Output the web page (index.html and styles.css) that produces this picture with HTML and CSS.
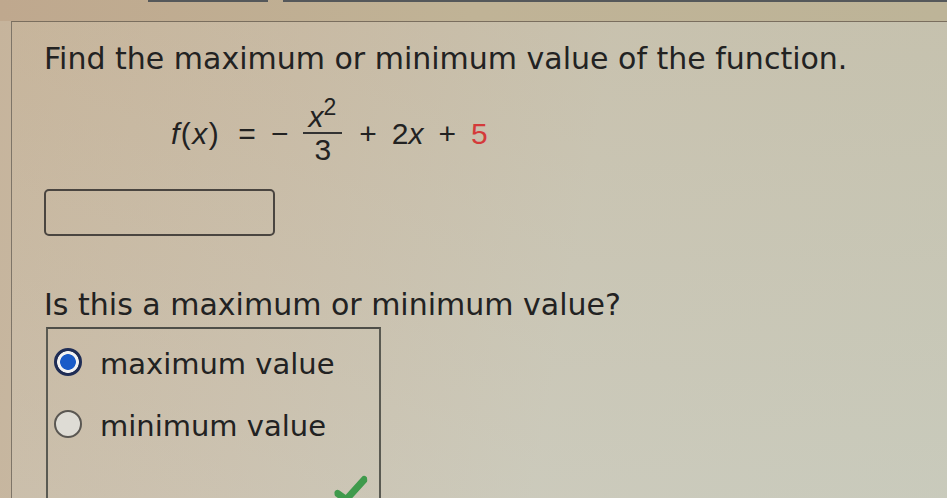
FILE: index.html
```html
<!DOCTYPE html>
<html>
<head>
<meta charset="utf-8">
<link rel="stylesheet" href="styles.css">
</head>
<body>
<div class="topbar">
  <div class="tab tab-a"></div>
  <div class="tab tab-b"></div>
</div>
<div class="panel">
  <p class="title">Find the maximum or minimum value of the function.</p>
  <div class="formula">
    <span class="fx"><i>f</i>(<i>x</i>)</span>
    <span class="op">=</span>
    <span class="op">−</span>
    <span class="frac"><span class="num"><i>x</i><sup>2</sup></span><span class="den">3</span></span>
    <span class="op">+</span>
    <span>2<i>x</i></span>
    <span class="op">+</span>
    <span class="red">5</span>
  </div>
  <div class="answer"></div>
  <p class="question">Is this a maximum or minimum value?</p>
  <div class="choices">
    <div class="choice"><span class="radio checked"></span><span class="label">maximum value</span></div>
    <div class="choice"><span class="radio"></span><span class="label">minimum value</span></div>
    <svg class="check" width="34" height="26" viewBox="0 0 34 26"><path d="M3 17 L11 24 L31 6" fill="none" stroke="#3f9a4c" stroke-width="7" stroke-linecap="round" stroke-linejoin="round"/></svg>
  </div>
</div>
</body>
</html>
```
FILE: styles.css
```css
html, body {
  margin: 0;
  padding: 0;
  width: 947px;
  height: 498px;
  overflow: hidden;
}
body {
  background: linear-gradient(100deg, #c6b49c 0%, #c8bca8 30%, #c8c6b6 60%, #c4c6b6 100%);
  font-family: "DejaVu Sans", Verdana, sans-serif;
  color: #222;
  position: relative;
}
.topbar {
  height: 21px;
  position: relative;
  background: linear-gradient(90deg, #bfa88e, #c0b396 50%, #bdb498);
}
.tab {
  position: absolute;
  top: 0;
  height: 2px;
  background: #55585a;
}
.tab-a { left: 148px; width: 120px; }
.tab-b { left: 283px; right: 0; }
.panel {
  margin-left: 11px;
  border-top: 1px solid #7a6e5e;
  border-left: 1px solid #7e7568;
  height: 477px;
  padding-left: 32px;
  box-sizing: border-box;
  background: linear-gradient(180deg, rgba(200,180,150,0.25), rgba(215,215,205,0.25));
}
.title {
  margin: 0;
  padding-top: 17px;
  font-size: 30px;
  line-height: 40px;
}
.formula {
  display: flex;
  align-items: center;
  gap: 15px;
  margin-left: 127px;
  margin-top: 20px;
  height: 70px;
  font-family: "Liberation Sans", Arial, sans-serif;
  font-size: 30px;
  color: #222;
}
.formula .fx { margin-right: 3px; letter-spacing: 1.5px; }
.frac {
  display: inline-flex;
  flex-direction: column;
  align-items: center;
  margin: 0 2px 0 0;
}
.frac .num {
  border-bottom: 2px solid #333;
  padding: 0 6px 0 5px;
  line-height: 30px;
}
.frac .num sup { font-size: 23px; vertical-align: 12px; line-height: 0; }
.frac .den { line-height: 32px; }
.red { color: #d43a3a; }
.answer {
  margin-top: 20px;
  width: 231px;
  height: 47px;
  box-sizing: border-box;
  border: 2px solid #4a4540;
  border-radius: 5px;
}
.question {
  margin: 49px 0 0;
  font-size: 30px;
  line-height: 40px;
}
.choices {
  position: relative;
  margin: 2px 0 0 2px;
  width: 335px;
  height: 171px;
  box-sizing: border-box;
  border-top: 2px solid #4e4e48;
  border-left: 2px solid #5a5a52;
  border-right: 2px solid #5a5a52;
  padding: 8px 0 0 6px;
}
.choice {
  display: flex;
  align-items: center;
  gap: 18px;
  font-size: 29px;
  height: 50px;
  margin-bottom: 12px;
}
.label { padding-top: 4px; }
.radio {
  width: 28px;
  height: 28px;
  box-sizing: border-box;
  border-radius: 50%;
  border: 2px solid #5a5752;
  background: #dedcd5;
  flex: none;
}
.radio.checked {
  border: 2px solid #1f2d55;
  background: radial-gradient(circle, #1a5bc8 0 7.5px, #f2f2f2 8.2px 10.5px, #1f2d55 11.2px);
}
.check {
  position: absolute;
  left: 286px;
  top: 146px;
  transform: rotate(-6deg);
}
```
